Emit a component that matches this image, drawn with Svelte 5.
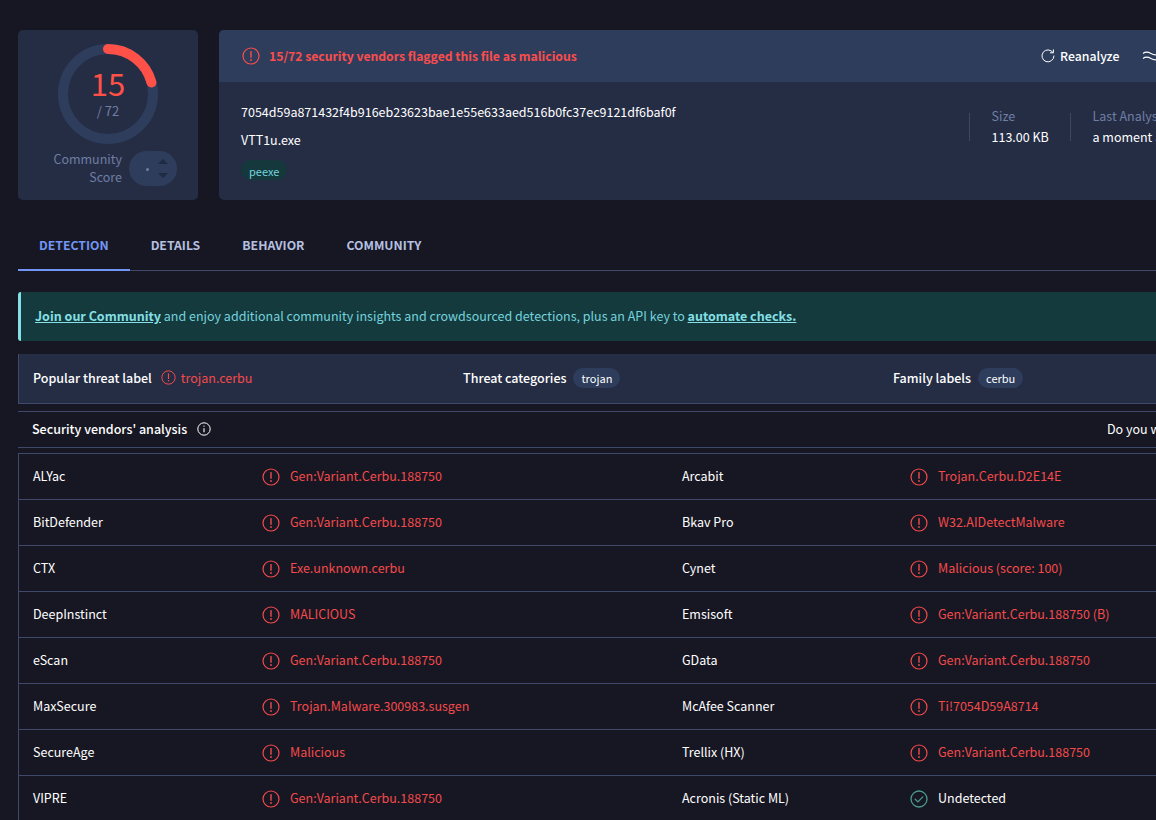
<script>
  const hash = '7054d59a871432f4b916eb23623bae1e55e633aed516b0fc37ec9121df6baf0f';

  const rows = [
    ['ALYac', 'Gen:Variant.Cerbu.188750', 'Arcabit', 'Trojan.Cerbu.D2E14E'],
    ['BitDefender', 'Gen:Variant.Cerbu.188750', 'Bkav Pro', 'W32.AIDetectMalware'],
    ['CTX', 'Exe.unknown.cerbu', 'Cynet', 'Malicious (score: 100)'],
    ['DeepInstinct', 'MALICIOUS', 'Emsisoft', 'Gen:Variant.Cerbu.188750 (B)'],
    ['eScan', 'Gen:Variant.Cerbu.188750', 'GData', 'Gen:Variant.Cerbu.188750'],
    ['MaxSecure', 'Trojan.Malware.300983.susgen', 'McAfee Scanner', 'Ti!7054D59A8714'],
    ['SecureAge', 'Malicious', 'Trellix (HX)', 'Gen:Variant.Cerbu.188750'],
    ['VIPRE', 'Gen:Variant.Cerbu.188750', 'Acronis (Static ML)', null]
  ];

  const tabs = ['DETECTION', 'DETAILS', 'BEHAVIOR', 'COMMUNITY'];

  // ring arc for 15 of 72
  const radius = 45;
  const circumference = 2 * Math.PI * radius;
  const arc = (15 / 72) * circumference;
</script>

{#snippet alert(size)}
  <svg class="alert" width={size} height={size} viewBox="0 0 18 18" fill="none" stroke="currentColor">
    <circle cx="9" cy="9" r="8" stroke-width="1.2" />
    <path d="M9 4.6v5.6" stroke-width="1.4" stroke-linecap="round" />
    <circle cx="9" cy="13" r="0.9" fill="currentColor" stroke="none" />
  </svg>
{/snippet}

{#snippet result(name, value)}
  <div class="cell name">{name}</div>
  <div class="cell value">
    {#if value}
      {@render alert(18)}
      <span>{value}</span>
    {:else}
      <svg class="ok" width="18" height="18" viewBox="0 0 18 18" fill="none" stroke="currentColor">
        <circle cx="9" cy="9" r="8" stroke-width="1.3" />
        <path d="M5.2 9.2l2.7 2.7 4.9-5" stroke-width="1.3" stroke-linecap="round" stroke-linejoin="round" />
      </svg>
      <span class="clean">Undetected</span>
    {/if}
  </div>
{/snippet}

<div class="page">
  <section class="top">
    <div class="score-card">
      <div class="ring">
        <svg width="100" height="100" viewBox="0 0 100 100" fill="none">
          <circle cx="50" cy="50" r={radius} stroke="#2e3d5c" stroke-width="10" />
          <circle
            cx="50"
            cy="50"
            r={radius}
            stroke="#ff5147"
            stroke-width="10"
            stroke-linecap="round"
            stroke-dasharray="{arc} {circumference}"
            transform="rotate(-90 50 50)"
          />
        </svg>
        <div class="ring-text">
          <div class="positives">15</div>
          <div class="total">/ 72</div>
        </div>
      </div>
      <div class="community">
        <div class="community-label">Community<br />Score</div>
        <div class="vote">
          <span class="dot"></span>
          <span class="arrows">
            <span class="up"></span>
            <span class="down"></span>
          </span>
        </div>
      </div>
    </div>

    <div class="file-card">
      <div class="file-head">
        <div class="verdict">
          {@render alert(18)}
          <span>15/72 security vendors flagged this file as malicious</span>
        </div>
        <div class="actions">
          <span class="reanalyze">
            <svg width="14" height="14" viewBox="0 0 14 14" fill="none" stroke="currentColor" stroke-width="1">
              <path d="M11.9 3.4A6 6 0 1 0 13 7" stroke-linecap="round" />
              <path d="M12.4 0.8v3h-3" stroke-linecap="round" stroke-linejoin="round" />
            </svg>
            Reanalyze
          </span>
          <svg width="18" height="14" viewBox="0 0 18 14" fill="none" stroke="currentColor" stroke-width="1.1">
            <path d="M1 4.5c2.5-2 4.5-2 8 0s5.5 2 8 0" />
            <path d="M1 9.5c2.5-2 4.5-2 8 0s5.5 2 8 0" />
          </svg>
        </div>
      </div>
      <div class="file-body">
        <div class="file-main">
          <div class="hash">{hash}</div>
          <div class="filename">VTT1u.exe</div>
          <span class="tag">peexe</span>
        </div>
        <div class="facts">
          <div class="fact">
            <div class="fact-label">Size</div>
            <div class="fact-value">113.00 KB</div>
          </div>
          <div class="fact">
            <div class="fact-label">Last Analysis Date</div>
            <div class="fact-value">a moment ago</div>
          </div>
        </div>
      </div>
    </div>
  </section>

  <nav class="tabs">
    {#each tabs as tab, i}
      <span class="tab" class:active={i === 0}>{tab}</span>
    {/each}
  </nav>

  <div class="banner">
    <a href="#join">Join our Community</a> and enjoy additional community insights and crowdsourced detections, plus an API key to <a href="#api">automate checks.</a>
  </div>

  <div class="threat">
    <div class="threat-col">
      <b>Popular threat label</b>
      <span class="threat-label">{@render alert(15)} trojan.cerbu</span>
    </div>
    <div class="threat-col">
      <b>Threat categories</b>
      <span class="pill">trojan</span>
    </div>
    <div class="threat-col">
      <b>Family labels</b>
      <span class="pill">cerbu</span>
    </div>
  </div>

  <div class="analysis-head">
    <div class="analysis-title">
      Security vendors' analysis
      <svg width="14" height="14" viewBox="0 0 14 14" fill="none" stroke="currentColor">
        <circle cx="7" cy="7" r="6.2" stroke-width="1" />
        <path d="M7 6.2v4" stroke-width="1.1" />
        <circle cx="7" cy="4.1" r="0.7" fill="currentColor" stroke="none" />
      </svg>
    </div>
    <div class="analysis-ask">Do you want to automate checks?</div>
  </div>

  <div class="table">
    {#each rows as row}
      <div class="row">
        {@render result(row[0], row[1])}
        {@render result(row[2], row[3])}
      </div>
    {/each}
  </div>
</div>

<style>
  :global(html), :global(body) {
    margin: 0;
    height: 820px;
    overflow: hidden;
    background: #171723;
  }

  .page {
    width: 1400px;
    padding: 30px 0 0 18px;
    box-sizing: border-box;
    font-family: "Noto Sans CJK JP", "Noto Sans", sans-serif;
    font-size: 12.5px;
    color: #fff;
  }

  .top {
    display: flex;
    gap: 21px;
  }

  .score-card {
    width: 180px;
    height: 170px;
    flex-shrink: 0;
    background: #252d45;
    border-radius: 5px;
    display: flex;
    flex-direction: column;
    align-items: center;
    padding-top: 14px;
    box-sizing: border-box;
  }

  .ring {
    position: relative;
    width: 100px;
    height: 100px;
  }

  .ring svg {
    display: block;
  }

  .ring-text {
    position: absolute;
    inset: 0;
    text-align: center;
  }

  .positives {
    margin-top: 21px;
    font-size: 31px;
    line-height: 36px;
    color: #ff5147;
  }

  .total {
    font-size: 13px;
    line-height: 20px;
    color: #6f7ea3;
  }

  .community {
    display: flex;
    align-items: center;
    gap: 7px;
    margin-top: 6px;
    margin-left: 14px;
  }

  .community-label {
    width: 69px;
    line-height: 18px;
    text-align: right;
    color: #6f7ea3;
  }

  .vote {
    width: 48px;
    height: 35px;
    border-radius: 18px;
    background: #2e3d5c;
    display: flex;
    align-items: center;
    gap: 9px;
    padding-left: 17px;
    box-sizing: border-box;
  }

  .dot {
    width: 3px;
    height: 3px;
    border-radius: 50%;
    background: #6f7ea3;
    margin-top: 3px;
  }

  .arrows {
    display: flex;
    flex-direction: column;
    gap: 9px;
  }

  .up, .down {
    width: 0;
    height: 0;
    border-left: 5px solid transparent;
    border-right: 5px solid transparent;
  }

  .up {
    border-bottom: 5px solid #1f2a45;
  }

  .down {
    border-top: 5px solid #1f2a45;
  }

  .file-card {
    flex: 1;
    height: 170px;
    background: #252d45;
    border-radius: 5px;
    overflow: hidden;
  }

  .file-head {
    height: 52px;
    background: #2e3d5c;
    display: flex;
    align-items: center;
    padding-left: 23px;
  }

  .verdict {
    width: 799px;
    flex-shrink: 0;
    display: flex;
    align-items: center;
    gap: 9px;
    font-weight: 700;
    font-size: 12.2px;
    color: #fb4d4d;
    margin-top: -1px;
  }

  .actions {
    display: flex;
    align-items: center;
    gap: 23px;
    margin-top: -1px;
  }

  .reanalyze {
    display: flex;
    align-items: center;
    gap: 5px;
    font-size: 12.3px;
    font-weight: 500;
  }

  .file-body {
    display: flex;
    padding-left: 22px;
  }

  .file-main {
    width: 728px;
  }

  .hash {
    margin-top: 20px;
    line-height: 20px;
  }

  .filename {
    margin-top: 8px;
    line-height: 20px;
  }

  .tag {
    display: inline-block;
    margin-top: 10px;
    padding: 0 8px;
    height: 20px;
    line-height: 22px;
    border-radius: 10px;
    font-size: 11px;
    background: #14383c;
    color: #74d3dc;
  }

  .facts {
    display: flex;
    margin-top: 31px;
    height: 28px;
  }

  .fact {
    border-left: 1px solid #3b4864;
    padding-left: 21.5px;
    width: 78.5px;
    white-space: nowrap;
  }

  .fact + .fact {
    width: 200px;
  }

  .fact-label, .fact-value {
    line-height: 20px;
    margin-top: -7px;
  }

  .fact-value {
    margin-top: 1px;
  }

  .fact-label {
    color: #6f7ea3;
  }

  .tabs {
    display: flex;
    margin-top: 20px;
    height: 50px;
    border-bottom: 1px solid #3f4a6b;
  }

  .tab {
    padding: 0 21px;
    line-height: 50px;
    height: 51px;
    box-sizing: border-box;
    font-weight: 700;
    font-size: 12.25px;
    color: #b5c0e0;
  }

  .tab.active {
    color: #7296f5;
    border-bottom: 2px solid #7296f5;
  }

  .banner {
    margin-top: 21px;
    height: 49px;
    line-height: 47px;
    box-sizing: border-box;
    padding-left: 14px;
    background: #153a3e;
    border-left: 3px solid #84e0e6;
    border-radius: 3px;
    color: #74d3dc;
  }

  .banner a {
    color: #84e0e6;
    font-weight: 700;
    text-decoration: underline;
  }

  .threat {
    margin-top: 13px;
    display: grid;
    grid-template-columns: repeat(3, 430px);
    align-items: center;
    height: 50px;
    box-sizing: border-box;
    padding: 0 0 2px 14px;
    background: #252d45;
    border-left: 1px solid #3f4a6b;
    border-bottom: 1px solid #3f4a6b;
  }

  .threat-col {
    display: flex;
    align-items: center;
    gap: 7px;
  }

  .threat-col b {
    font-weight: 500;
  }

  .threat-label {
    display: flex;
    align-items: center;
    gap: 5px;
    margin-left: 2px;
    color: #f44a4a;
  }

  .pill {
    height: 20px;
    line-height: 20px;
    padding: 0 8px;
    border-radius: 10px;
    font-size: 11px;
    background: #2e3d5c;
  }

  .analysis-head {
    margin-top: 7px;
    height: 37px;
    box-sizing: border-box;
    padding: 0 0 2px 14px;
    border-top: 1px solid #3f4a6b;
    border-bottom: 1px solid #3f4a6b;
    display: flex;
    align-items: center;
  }

  .analysis-title {
    width: 1075px;
    flex-shrink: 0;
    display: flex;
    align-items: center;
    gap: 10px;
    font-weight: 500;
  }

  .table {
    margin-top: 5px;
    border-top: 1px solid #3f4a6b;
    border-left: 1px solid #3f4a6b;
  }

  .row {
    display: grid;
    grid-template-columns: 229px 420px 228px 420px;
    height: 46px;
    box-sizing: border-box;
    align-items: center;
    padding-left: 14px;
    border-bottom: 1px solid #3f4a6b;
  }

  .name, .value span {
    padding-bottom: 2px;
  }

  .value {
    display: flex;
    align-items: center;
    gap: 10px;
    color: #f44a4a;
  }

  .ok {
    color: #4a9c8c;
  }

  .value .clean {
    color: #fff;
  }
</style>
